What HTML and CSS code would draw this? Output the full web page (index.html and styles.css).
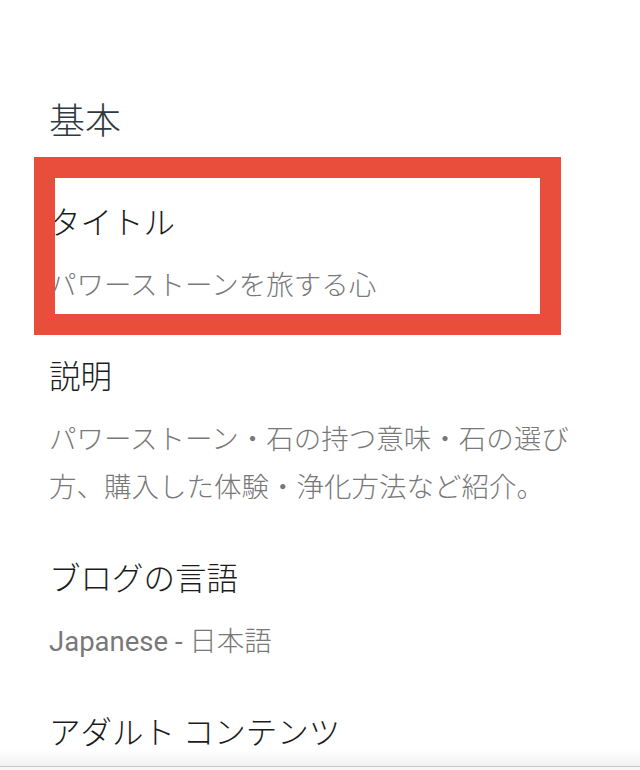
FILE: index.html
```html
<!DOCTYPE html>
<html lang="ja">
<head>
<meta charset="utf-8">
<title>基本</title>
<link rel="stylesheet" href="styles.css">
</head>
<body>
<main class="page">
  <h1 class="section-title">基本</h1>
  <div class="item item-marked">
    <div class="item-title">タイトル</div>
    <div class="item-value">パワーストーンを旅する心</div>
    <div class="mark"></div>
  </div>
  <div class="item">
    <div class="item-title">説明</div>
    <div class="item-value">パワーストーン・石の持つ意味・石の選び方、購入した体験・浄化方法など紹介。</div>
  </div>
  <div class="item">
    <div class="item-title">ブログの言語</div>
    <div class="item-value"><span class="latin">Japanese -</span> 日本語</div>
  </div>
  <div class="item">
    <div class="item-title">アダルト コンテンツ</div>
  </div>
</main>
<div class="bottom-edge"></div>
</body>
</html>
```

FILE: styles.css
```css
html, body {
  margin: 0;
  padding: 0;
  background: #ffffff;
  height: 770px;
  overflow: hidden;
}

body {
  font-family: Roboto, "Noto Sans CJK JP", "Noto Sans", sans-serif;
  font-weight: 300;
}

.page {
  padding: 100px 61px 0 49px;
  display: flex;
  flex-direction: column;
}

.section-title {
  margin: 0 0 60px 0;
  font-size: 36px;
  line-height: 44px;
  font-weight: 300;
  color: #2f3a40;
}

.item {
  display: flex;
  flex-direction: column;
  padding-bottom: 48px;
}

.item-marked {
  position: relative;
}

.item-title {
  font-size: 31.5px;
  line-height: 40px;
  color: #1c1c1c;
}

.item-value {
  margin-top: 18px;
  font-size: 27.5px;
  line-height: 48px;
  color: #787878;
}

.latin {
  font-weight: 400;
}

.mark {
  position: absolute;
  left: -15px;
  top: -47px;
  width: 527px;
  height: 178px;
  box-sizing: border-box;
  border: 21px solid #e94e3d;
}

.bottom-edge {
  position: fixed;
  left: 0;
  right: 0;
  bottom: 0;
  height: 20px;
  background: linear-gradient(to bottom, rgba(245,245,245,0) 0px, #f3f3f3 15px, #f3f3f3 16px, #c8c8c8 16px, #c8c8c8 17px, #f7f7f7 17px);
}
```
